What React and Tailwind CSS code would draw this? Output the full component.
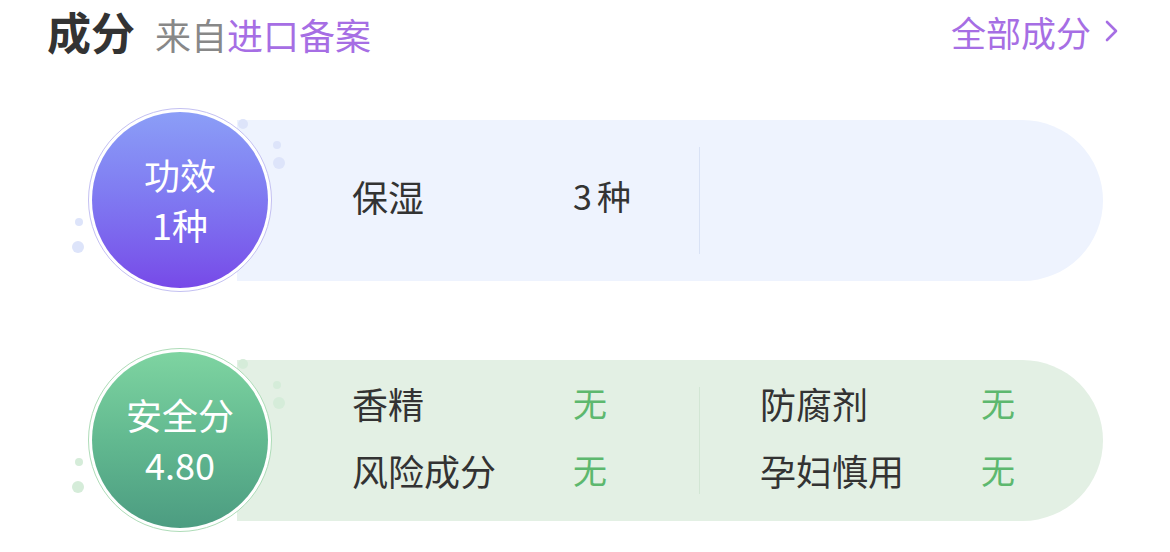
import React from 'react'

const Dots = ({ color }) => (
  <>
    <span className={`absolute left-[150px] top-[11px] w-[10px] h-[10px] rounded-full ${color}`} />
    <span className={`absolute left-[185px] top-[33px] w-[8px] h-[8px] rounded-full ${color}`} />
    <span className={`absolute left-[185px] top-[49px] w-[12px] h-[12px] rounded-full ${color}`} />
    <span className={`absolute left-[-13px] top-[110px] w-[8px] h-[8px] rounded-full ${color}`} />
    <span className={`absolute left-[-16px] top-[133px] w-[12px] h-[12px] rounded-full ${color}`} />
  </>
)

function Row({ circle, ring, dot, pill, line, title, sub, children }) {
  return (
    <div className="flex items-center">
      <div className="relative z-10 ml-[88px] w-[184px] h-[184px] shrink-0">
        <Dots color={dot} />
        <div className={`w-full h-full rounded-full p-[3px] border ${ring} bg-white`}>
          <div className={`w-full h-full rounded-full flex flex-col items-center justify-center pb-[2px] text-white text-[36px] leading-[50px] ${circle}`}>
            <span>{title}</span>
            <span>{sub}</span>
          </div>
        </div>
      </div>
      <div className={`-ml-[35px] w-[866px] h-[161px] rounded-r-full flex items-center pl-[115px] ${pill}`}>
        <div className="w-[347px] flex flex-col gap-[31px] pb-[8px]">{children[0]}</div>
        <div className={`w-px h-[107px] ${line}`} />
        <div className="pl-[60px] flex flex-col gap-[31px] pb-[8px]">{children[1]}</div>
      </div>
    </div>
  )
}

const Item = ({ label, value, green }) => (
  <div className="flex items-center h-[36px] leading-[36px]">
    <span className="w-[221px] text-[#333333]">{label}</span>
    <span className={green ? 'text-[34px] text-[#5db86e]' : 'text-[34px] text-[#333333]'}>{value}</span>
  </div>
)

export default function App() {
  return (
    <div
      className="w-[1170px] h-[552px] bg-white overflow-hidden text-[36px]"
      style={{ fontFamily: '"Noto Sans CJK SC", "Noto Sans", sans-serif' }}
    >
      <header className="h-[62px] flex items-center justify-between pl-[47px] pr-[52px]">
        <div className="flex items-baseline">
          <span className="text-[44px] font-bold text-[#333333] leading-none">成分</span>
          <span className="ml-[20px] text-[36px] text-[#888888] leading-none">来自</span>
          <span className="text-[36px] text-[#a66ee4] leading-none">进口备案</span>
        </div>
        <div className="flex items-center text-[35px] text-[#a66ee4] leading-none">
          <span>全部成分</span>
          <svg className="ml-[14px]" width="13" height="24" viewBox="0 0 13 24" fill="none">
            <path d="M2 3l9 9-9 9" stroke="#a66ee4" strokeWidth="2.6" strokeLinecap="round" strokeLinejoin="round" />
          </svg>
        </div>
      </header>

      <div className="pt-[46px] flex flex-col gap-[56px]">
        <Row
          circle="bg-gradient-to-b from-[#8b9ef7] via-[#7f78f1] to-[#7749e8]"
          ring="border-[#c3c0f2]"
          dot="bg-[#dde4fa]"
          pill="bg-[#eef3fe]"
          line="bg-[#d9e2f5]"
          title="功效"
          sub="1种"
        >
          {[
            <Item
              key="a"
              label="保湿"
              value={
                <>
                  <span>3</span>
                  <span className="ml-[5px]">种</span>
                </>
              }
            />,
            null,
          ]}
        </Row>
        <Row
          circle="bg-gradient-to-b from-[#7ed4a1] via-[#62b990] to-[#4c9c81]"
          ring="border-[#aedcb8]"
          dot="bg-[#d5ecd9]"
          pill="bg-[#e3f0e4]"
          line="bg-[#d2e6d4]"
          title="安全分"
          sub="4.80"
        >
          {[
            <React.Fragment key="l">
              <Item label="香精" value="无" green />
              <Item label="风险成分" value="无" green />
            </React.Fragment>,
            <React.Fragment key="r">
              <Item label="防腐剂" value="无" green />
              <Item label="孕妇慎用" value="无" green />
            </React.Fragment>,
          ]}
        </Row>
      </div>
    </div>
  )
}
